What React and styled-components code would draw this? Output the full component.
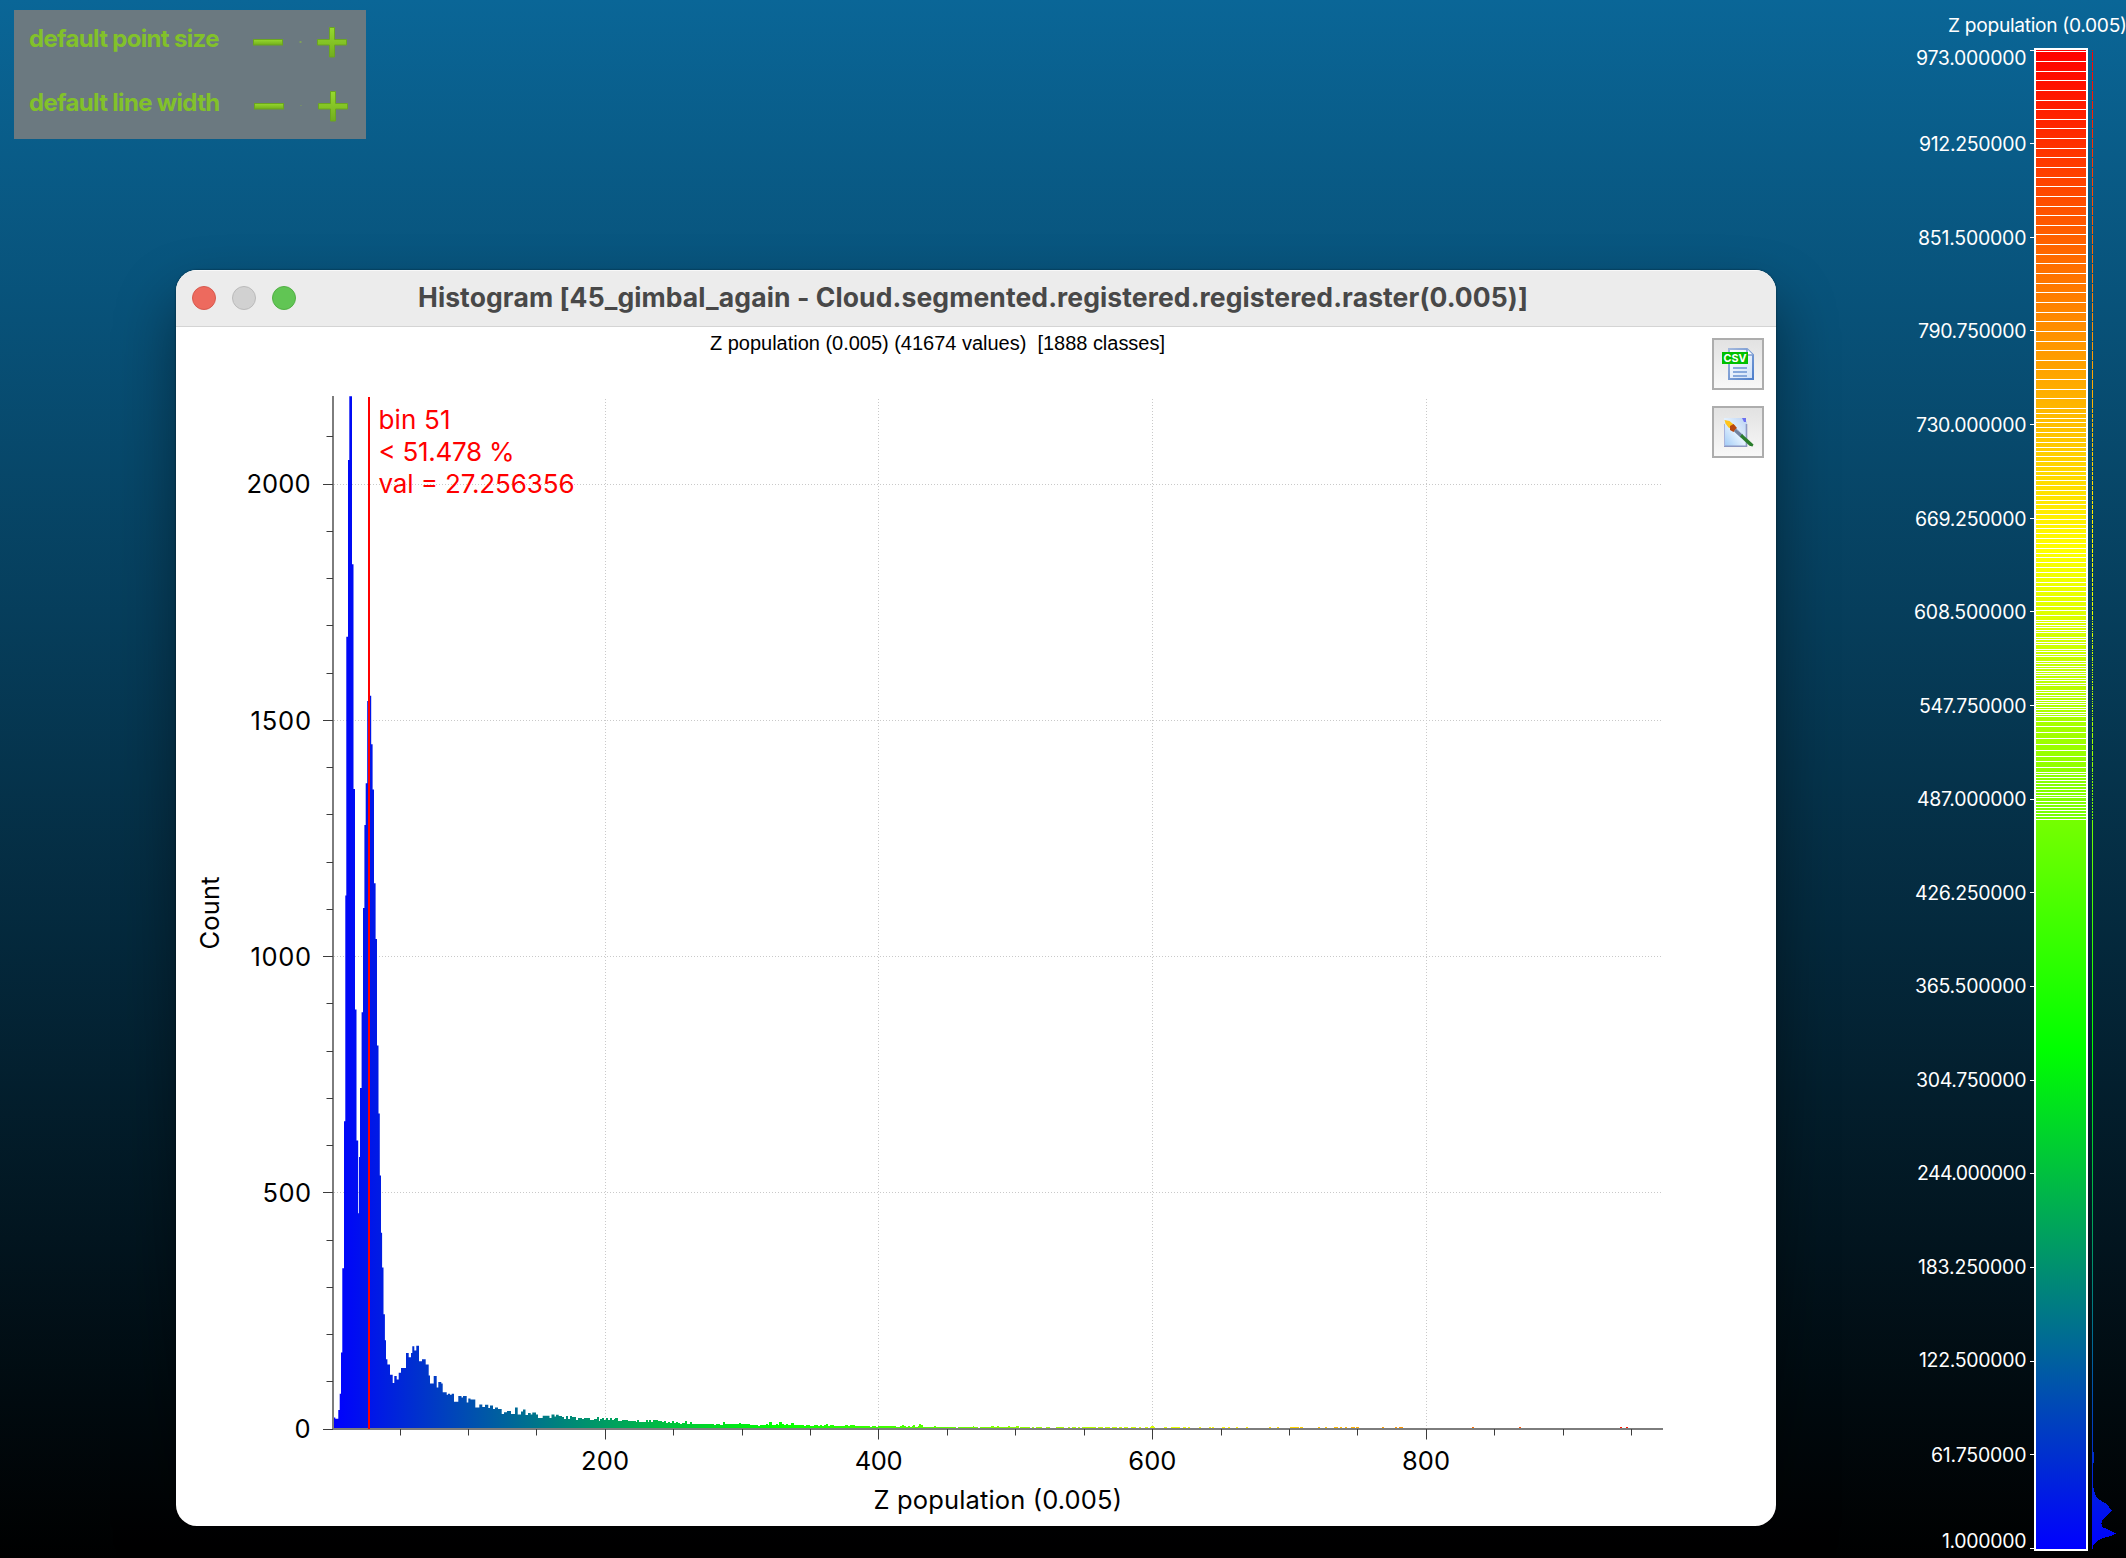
import React from "react";
import styled, { createGlobalStyle } from "styled-components";

const GlobalStyle = createGlobalStyle`
  html, body { margin: 0; padding: 0; background: #000; }
  * { box-sizing: border-box; }
`;

const UI_FONT = `Inter, "Liberation Sans", sans-serif`;

const Viewport = styled.main`
  position: relative;
  display: flex;
  justify-content: flex-end;
  width: 2126px;
  height: 1558px;
  overflow: hidden;
  background: linear-gradient(#0a6697, #000);
  font-family: ${UI_FONT};
`;

const HotZone = styled.section`
  position: absolute;
  left: 14px;
  top: 10px;
  display: flex;
  flex-direction: column;
  width: 352px;
  height: 129px;
  background: #6b7980;
`;

const HotRow = styled.div`
  display: flex;
  align-items: center;
  height: 64px;
  padding-left: 15px;
`;

const HotLabel = styled.span`
  flex: none;
  width: 210px;
  margin-top: -7px;
  font-size: 24px;
  font-weight: 700;
  letter-spacing: -0.68px;
  line-height: 30px;
  white-space: nowrap;
  color: #82c12a;
`;

const HotIcons = styled.svg`
  display: block;
  flex: none;
  width: 120px;
  height: 64px;
`;

const WindowFrame = styled.section`
  position: absolute;
  left: 176px;
  top: 270px;
  display: flex;
  flex-direction: column;
  width: 1600px;
  height: 1256px;
  border-radius: 21px;
  overflow: hidden;
  background: #fff;
`;

const WindowShadow = styled.div`
  position: absolute;
  left: 176px;
  top: 270px;
  width: 1600px;
  height: 1256px;
  border-radius: 21px;
  box-shadow: 0 0 2px rgba(0, 0, 0, 0.6), 0 30px 60px rgba(0, 0, 0, 0.42);
`;

const TitleBar = styled.header`
  display: flex;
  align-items: center;
  flex: none;
  height: 57px;
  padding: 0 0 1px 16px;
  background: #ececec;
  border-top: 1px solid #f8f8f8;
  border-bottom: 1px solid #d4d4d4;
`;

const Lights = styled.div`
  display: flex;
  flex: none;
  gap: 16px;
  width: 226px;
`;

const Light = styled.i`
  width: 24px;
  height: 24px;
  border-radius: 50%;
  background: ${(p) => p.$fill};
  border: 1px solid ${(p) => p.$edge};
`;

const Title = styled.h1`
  margin: -2px 0 0;
  font-size: 26.5px;
  font-weight: 700;
  line-height: 32px;
  letter-spacing: 0.1px;
  white-space: pre;
  color: #484848;
`;

const Body = styled.div`
  display: flex;
  height: 1199px;
`;

const Chart = styled.svg`
  display: block;
  flex: none;
  width: 1536px;
  height: 1199px;
`;

const Tools = styled.aside`
  display: flex;
  flex-direction: column;
  gap: 16px;
  padding-top: 11px;
`;

const ToolButton = styled.button`
  display: grid;
  place-items: center;
  width: 52px;
  height: 52px;
  padding: 0;
  border: 2px solid #adadad;
  background: linear-gradient(#e2e2e2, #f8f8f8);
`;

const Glyph = styled.svg`
  display: block;
  width: 32px;
  height: 32px;
`;

const Legend = styled.svg`
  display: block;
  width: 226px;
  height: 1558px;
`;

const PlotText = styled.text`
  font-family: ${(p) => p.$family || UI_FONT};
  font-size: ${(p) => p.$size}px;
  font-weight: 400;
  fill: ${(p) => p.$fill || "#000"};
  white-space: pre;
`;

/* ---------- histogram data, in window pixels ---------- */

const BASE = 1429;
const X0 = 333;
const X_UNIT = 1.3683;
const Y_UNIT = 0.4724;
const xOf = (v) => X0 + (v - 1) * X_UNIT;
const yOf = (v) => BASE - v * Y_UNIT;

// [left, right, top]
const PEAKS = [
  [333, 334, 1419.4], [334, 335.3, 1417.4], [335.3, 338.3, 1418.7], [338.3, 339.7, 1410],
  [339.7, 341, 1393.7], [341, 342.3, 1352.4], [342.3, 344, 1268.3], [344, 345.3, 1121.2],
  [345.3, 346.3, 895.4], [346.3, 348, 636.8], [348, 349.3, 460], [349.3, 352, 396.3],
  [352, 353.5, 564.3], [353.5, 355, 789], [355, 356.5, 1009.6], [356.5, 358.2, 1140.5],
  [358.2, 359, 1213.2], [359, 360, 1157], [360, 361.6, 1088], [361.6, 363, 1012.3],
  [363, 364.4, 907.9], [364.4, 365.7, 825], [365.7, 367.2, 783.2], [367.2, 368.8, 701],
  [368.8, 371.2, 695.7], [371.2, 372.6, 744.3], [372.6, 374, 789.6], [374, 375.6, 883.2],
  [375.6, 377, 939], [377, 378.5, 1045.5], [378.5, 379.8, 1113.4], [379.8, 381, 1175.6],
  [381, 382.1, 1232.8], [382.1, 383.5, 1267.6], [383.5, 384.9, 1314.2], [384.9, 386, 1340.3],
  [386, 387.4, 1359.2], [387.4, 390, 1364.6], [390, 392.7, 1374.7], [392.7, 394.3, 1382.9],
  [394.3, 396.7, 1376.1], [396.7, 398.7, 1379.5], [398.7, 401, 1372.7], [401, 406, 1368],
  [406, 408.7, 1353.1], [408.7, 411, 1357.2], [411, 412.3, 1353.1], [412.3, 414.3, 1346.3],
  [414.3, 416.3, 1350.4], [416.3, 419, 1345.7], [419, 422, 1361.2], [422, 425.7, 1359.2],
  [425.7, 428.7, 1364.6], [428.7, 430, 1375.4], [430, 433.7, 1383.5], [433.7, 436.7, 1376.1],
  [436.7, 438.3, 1387.6], [438.3, 441.3, 1381.9], [441.3, 442.7, 1383.5], [442.7, 446.7, 1392.3],
  [446.7, 448, 1394.7], [448, 450, 1393.7], [450, 451.7, 1394.7], [451.7, 454, 1393.7],
  [454, 458.3, 1401.8], [458.3, 461.5, 1396], [461.5, 463, 1397.5], [463, 466.7, 1396],
  [466.7, 468.3, 1402.5], [468.3, 470.5, 1398.5], [470.5, 475.3, 1399.5], [475.3, 479.3, 1407.5],
  [479.3, 482.3, 1404.5], [482.3, 485, 1406.9], [485, 488.3, 1404.8], [488.3, 490, 1408],
  [490, 493, 1405.5], [493, 495, 1409], [495, 498, 1407.6], [498, 501.7, 1409],
  [501.7, 504, 1414], [504, 507, 1412.2], [507, 511, 1411], [511, 515, 1414],
  [515, 517.7, 1407.6], [517.7, 521, 1414.5], [521, 523, 1411.5], [523, 525.5, 1409.6],
  [525.5, 528, 1415], [528, 530.7, 1413], [530.7, 532.3, 1414.6], [532.3, 536, 1412.6],
  [536, 538, 1414.4], [538, 542.7, 1418], [542.7, 549.5, 1415.7], [549.5, 551.5, 1418],
  [551.5, 554.5, 1414.4], [554.5, 556, 1416.5], [556, 558.7, 1414.8],
];

const TAIL = [
  [558, 11], [570, 9.5], [585, 8.5], [600, 9], [615, 8.5], [640, 6.5], [655, 7], [675, 5.4],
  [700, 4], [740, 3.4], [760, 2.8], [780, 3.8], [800, 2.8], [830, 2.6], [860, 1.7], [890, 1.6], [950, 1],
];

const SPIKES = [
  [570, 572, 12], [588, 590, 10], [597, 599.3, 11.5], [615.3, 617.3, 10],
  [637, 639.3, 8.4], [646, 648, 8], [649, 651, 8.4], [653, 655.3, 8], [685, 687, 7],
  [690, 692, 6], [723.3, 725.3, 6], [739, 741, 5], [769, 772, 5.6], [779, 782, 5.8],
  [791, 794, 4.7], [826, 828.3, 4.4], [832, 834, 3.4], [845, 848, 3], [850, 855, 3],
  [863, 867, 2.3], [886, 891, 2.3], [902, 904, 3], [913, 915, 3], [918.5, 921, 4], [921, 923, 3],
  [934, 936, 2.3], [972.5, 974, 2.3], [991, 994, 2.3], [997, 999, 2.3], [1008, 1010, 2.3],
  [1016, 1018.5, 2.5], [1151, 1154, 2.4],
];

const DASHES = [
  [0, 10], [15, 30], [36, 52], [58, 65], [72, 84], [92, 108], [117, 124], [136, 144], [150, 164],
  [193, 201], [214, 240], [249, 257], [263, 270], [298, 304], [328, 334], [337, 343], [367, 375],
  [384, 390], [407, 413], [437, 443], [508, 514], [532, 538], [570, 596], [601, 608], [655, 661],
  [676, 682], [702, 714], [720, 726], [736, 742], [753, 764], [768, 776], [847, 853], [885, 891],
  [897, 909], [1115, 1122], [1257, 1263], [1561, 1567], [1578, 1584],
].map(([a, b]) => [1100 + a / 3, 1100 + b / 3]);

const noise = (i) => {
  const s = Math.sin(i * 127.1 + 11.7) * 43758.5453;
  return s - Math.floor(s);
};

const tailHeight = (x) => {
  for (let i = 1; i < TAIL.length; i++) {
    const [x1, h1] = TAIL[i];
    const [x0, h0] = TAIL[i - 1];
    if (x <= x1) return h0 + ((h1 - h0) * (x - x0)) / (x1 - x0);
  }
  return 1;
};

const rect = (l, r, t) => `M${l} ${BASE}V${t}H${r}V${BASE}Z`;

const envelope = () => {
  let d = `M${X0} ${BASE}`;
  PEAKS.forEach(([l, r, t]) => {
    d += `L${l} ${t}L${r} ${t}`;
  });
  return `${d}V${BASE}Z`;
};

const tail = () => {
  let d = "";
  let i = 0;
  for (let x = 558; x < 950; x += 2, i++) {
    const h = tailHeight(x) * (0.8 + 0.4 * noise(i));
    d += rect(x, x + 2, 1428 - h);
  }
  for (let x = 950; x < 1100; x += 2, i++) {
    const keep = x < 1040 ? 0.88 : 0.62;
    if (noise(i) < keep) d += rect(x, x + 2, 1427);
  }
  SPIKES.forEach(([l, r, h]) => (d += rect(l, r, 1428 - h)));
  DASHES.forEach(([l, r]) => (d += rect(l, r, 1427)));
  return d;
};

const RampStops = () => (
  <>
    <stop offset="0" stopColor="#00f" />
    <stop offset="0.3333" stopColor="#0f0" />
    <stop offset="0.6667" stopColor="#ff0" />
    <stop offset="1" stopColor="#f00" />
  </>
);

function Histogram() {
  const yMinor = Array.from({ length: 22 }, (_, i) => i * 100);
  const xMinor = Array.from({ length: 19 }, (_, i) => (i + 1) * 50);
  return (
    <Chart viewBox="176 327 1536 1199">
      <defs>
        <linearGradient id="bars" gradientUnits="userSpaceOnUse" x1="333" x2="1663" y1="0" y2="0">
          <RampStops />
        </linearGradient>
      </defs>
      <PlotText x="710" y="350" $size={20} $family={`"Liberation Sans", Arial, sans-serif`} textLength="455">
        {"Z population (0.005) (41674 values)\u00a0 [1888 classes]"}
      </PlotText>

      <g stroke="#c9c9c9" strokeWidth="1" strokeDasharray="1 2">
        {[500, 1000, 1500, 2000].map((v) => (
          <line key={v} x1="334" x2="1661" y1={Math.floor(yOf(v)) + 0.5} y2={Math.floor(yOf(v)) + 0.5} />
        ))}
        {[200, 400, 600, 800].map((v) => (
          <line key={v} y1="399" y2="1428" x1={Math.floor(xOf(v)) + 0.5} x2={Math.floor(xOf(v)) + 0.5} />
        ))}
      </g>

      <path d={envelope()} fill="url(#bars)" />
      <path d={tail()} fill="url(#bars)" shapeRendering="crispEdges" />

      <g fill="#7d7d7d" shapeRendering="crispEdges">
        <rect x="332" y="396" width="2" height="1034" />
        <rect x="332" y="1428" width="1331" height="2" />
      </g>
      <g stroke="#3c3c3c" strokeWidth="1">
        {yMinor.map((v) => (
          <line
            key={v}
            x1={v % 500 === 0 ? 323 : 326.5}
            x2="333"
            y1={Math.floor(yOf(v)) + 0.5}
            y2={Math.floor(yOf(v)) + 0.5}
          />
        ))}
        {xMinor.map((v) => (
          <line
            key={v}
            y1="1429"
            y2={v % 200 === 0 ? 1439.5 : 1435.5}
            x1={Math.floor(xOf(v)) + 0.5}
            x2={Math.floor(xOf(v)) + 0.5}
          />
        ))}
      </g>

      <rect x="368" y="397" width="2" height="1032" fill="#f00" />

      <PlotText x="378.5" y="429" $size={26} $fill="#f00" textLength="72">bin 51</PlotText>
      <PlotText x="378.5" y="460.5" $size={26} $fill="#f00" textLength="136">&lt; 51.478 %</PlotText>
      <PlotText x="378.5" y="492.5" $size={26} $fill="#f00" textLength="196">val = 27.256356</PlotText>

      <PlotText x="246.5" y="493" $size={25.5} textLength="64">2000</PlotText>
      <PlotText x="250.5" y="729.5" $size={25.5} textLength="60.5">1500</PlotText>
      <PlotText x="250.5" y="965.5" $size={25.5} textLength="60.5">1000</PlotText>
      <PlotText x="262.5" y="1201.5" $size={25.5} textLength="48.5">500</PlotText>
      <PlotText x="294.500" y="1437.5" $size={25.5}>0</PlotText>

      {[200, 400, 600, 800].map((v) => (
        <PlotText key={v} x={xOf(v) - 24.3} y="1469.5" $size={25.5} textLength="48">{v}</PlotText>
      ))}
      <PlotText x="873.5" y="1508.5" $size={25.5} textLength="248.5">Z population (0.005)</PlotText>
      <PlotText transform="translate(219 949.5) rotate(-90)" $size={25.5} textLength="73">Count</PlotText>
    </Chart>
  );
}

/* ---------- colour scale ---------- */

const SCALE_LINES = [
  51, 61, 71, 80, 90, 100, 109, 119, 128, 138, 148, 157, 167, 177, 186, 196, 206, 215, 225, 234, 244,
  254, 263, 273, 283, 292, 302, 312, 321, 331, 341, 350, 360, 369, 379, 389, 398, 408, 413, 418, 422,
  427, 432, 437, 442, 447, 451, 456, 461, 466, 471, 475, 480, 485, 490, 495, 500, 504, 509, 514, 519,
  524, 528, 533, 538, 543, 548, 553, 557, 562, 567, 572, 577, 582, 586, 591, 596, 601, 606, 610, 615,
  620, 622, 625, 627, 630, 632, 637, 639, 642, 644, 649, 651, 654, 656, 661, 663, 666, 668, 671, 673,
  675, 678, 680, 683, 685, 690, 692, 695, 697, 700, 702, 704, 707, 709, 712, 714, 716, 721, 726, 732,
  738, 744, 750, 756, 761, 767, 772, 774, 777, 780, 783, 786, 789, 792, 795, 797, 801, 804, 807, 810,
  813, 816, 819,
];

// [label, left, baseline]
const SCALE_LABELS = [
  ["973.000000", 1916, 65], ["912.250000", 1919, 151], ["851.500000", 1918, 245],
  ["790.750000", 1918, 338], ["730.000000", 1916, 432], ["669.250000", 1915, 526],
  ["608.500000", 1914, 618.5], ["547.750000", 1919, 712.5], ["487.000000", 1917, 805.5],
  ["426.250000", 1915, 899.5], ["365.500000", 1915, 993], ["304.750000", 1916, 1086.5],
  ["244.000000", 1917, 1180], ["183.250000", 1918, 1274], ["122.500000", 1919, 1367],
  ["61.750000", 1931, 1461.5], ["1.000000", 1942, 1547.5],
];

// [y, right]
const SCALE_PROFILE = [
  [1486, 2093], [1490, 2094], [1493, 2095], [1497, 2096], [1500, 2100], [1503, 2105], [1507, 2109],
  [1511, 2112], [1514, 2108], [1517, 2105], [1519, 2103], [1523, 2101.4], [1527, 2102],
  [1529, 2107], [1532, 2113], [1533.5, 2116], [1536, 2111], [1538, 2103], [1541, 2097],
  [1544, 2094], [1547, 2093],
];

function ColorScale() {
  const profile = SCALE_PROFILE.map(([y, x]) => `L${x} ${y}`).join("");
  return (
    <Legend viewBox="1900 0 226 1558">
      <defs>
        <linearGradient id="ramp" gradientUnits="userSpaceOnUse" x1="0" x2="0" y1="1549" y2="50">
          <RampStops />
        </linearGradient>
        <mask id="gaps" maskUnits="userSpaceOnUse" x="2090" y="0" width="36" height="1558">
          <rect x="2090" y="0" width="36" height="1558" fill="#fff" />
          {SCALE_LINES.map((y) => (
            <rect key={y} x="2090" y={y} width="36" height="1" fill="#000" />
          ))}
        </mask>
      </defs>
      <PlotText x="1948" y="32" $size={19.2} $fill="#fff" textLength="179">Z population (0.005)</PlotText>
      <g shapeRendering="crispEdges">
        <rect x="2034" y="48" width="54" height="1503" fill="#fff" />
        <rect x="2036" y="50" width="50" height="1499" fill="url(#ramp)" />
        {SCALE_LINES.map((y) => (
          <rect key={y} x="2036" y={y} width="50" height="1" fill="#fff" />
        ))}
        {SCALE_LABELS.map(([label], i) => (
          <rect key={label} x="2030" y={Math.floor(50 + i * 93.65)} width="4" height="1" fill="#fff" />
        ))}
        <rect x="2092" y="50" width="1" height="1499" fill="url(#ramp)" mask="url(#gaps)" />
        <rect x="2092" y="1452" width="2" height="11" fill="url(#ramp)" />
        <path d={`M2092 1486${profile}L2092 1549Z`} fill="url(#ramp)" />
      </g>
      {SCALE_LABELS.map(([label, x, y]) => (
        <PlotText key={label} x={x} y={y} $size={19.5} $fill="#fff" textLength={2026.5 - x}>
          {label}
        </PlotText>
      ))}
    </Legend>
  );
}

/* ---------- controls ---------- */

function PlusMinus({ dx, dot }) {
  const edge = { fill: "url(#lime)", stroke: "#6ba61f", strokeWidth: 1 };
  return (
    <HotIcons viewBox="0 0 120 64">
      <defs>
        <linearGradient id="lime" x1="0" x2="0" y1="0" y2="1">
          <stop offset="0" stopColor="#96d92d" />
          <stop offset="1" stopColor="#72ae1d" />
        </linearGradient>
      </defs>
      <rect x={14.5 + dx} y="29.5" width="29" height="5.5" {...edge} />
      <rect x={60.5 + dx} y="31" width={dot} height={dot} fill="#7fa05a" />
      <path
        d="M90.5 17.5h5v12h12v5.5h-12v12h-5v-12h-12v-5.5h12z"
        transform={`translate(${dx} 0)`}
        {...edge}
      />
    </HotIcons>
  );
}

function CsvIcon() {
  return (
    <Glyph viewBox="0 0 32 32">
      <defs>
        <linearGradient id="sheet" x1="0" x2="1" y1="0" y2="1">
          <stop offset="0" stopColor="#fff" />
          <stop offset="1" stopColor="#cfe0f8" />
        </linearGradient>
        <linearGradient id="sheetEdge" x1="0" x2="1" y1="0" y2="1">
          <stop offset="0" stopColor="#a3b8dc" />
          <stop offset="1" stopColor="#4f7fcb" />
        </linearGradient>
      </defs>
      <path d="M7 1h18l6 6v24H7z" fill="url(#sheet)" stroke="url(#sheetEdge)" strokeWidth="2" />
      <path d="M25 1v6h6" fill="#fff" stroke="#7d9cd2" strokeWidth="1.6" />
      <path d="M11 20h14M11 24h14M11 28h14" stroke="#88a9dc" strokeWidth="2" />
      <rect x="0" y="4" width="26" height="12" fill="#00c000" />
      <text x="1.500" y="14" fontFamily="Inter, sans-serif" fontWeight="700" fontSize="11" textLength="23" lengthAdjust="spacingAndGlyphs" fill="#fff">
        CSV
      </text>
    </Glyph>
  );
}

function BrushIcon() {
  return (
    <Glyph viewBox="0 0 32 32">
      <defs>
        <linearGradient id="page" x1="0" x2="1" y1="1" y2="0">
          <stop offset="0" stopColor="#9cc8f6" />
          <stop offset="0.5" stopColor="#e3f1fe" />
          <stop offset="1" stopColor="#b9d0f2" />
        </linearGradient>
      </defs>
      <path d="M2 2h19l4 4v25H2z" fill="url(#page)" />
      <path d="M2 30.2h22.500V8" fill="none" stroke="#8d98c2" strokeWidth="1.6" />
      <path d="M2.500 30V8" stroke="#a9b4dc" strokeWidth="1" />
      <path d="M20 2h4v4h-2z" fill="#6b6ff0" />
      <path d="M2.500 4l5 1 6 5-3 3.500-4-2-3-4z" fill="#ffc41c" />
      <path d="M8 10l3.500-2 3.500 4-3.500 4-3.500-2z" fill="#b8460e" />
      <path d="M14 12.500l7 6-2.500 3-6.500-6z" fill="#70819f" />
      <path d="M14.500 13l6 5.200" stroke="#b9c9e2" strokeWidth="1" />
      <path d="M20 18l11.500 10.500-1 2-3-.8-9.500-9z" fill="#2a7d2c" />
    </Glyph>
  );
}

export default function App() {
  return (
    <Viewport>
      <GlobalStyle />
      <ColorScale />
      <HotZone>
        <HotRow>
          <HotLabel>default point size</HotLabel>
          <PlusMinus dx={0} dot={2} />
        </HotRow>
        <HotRow>
          <HotLabel>default line width</HotLabel>
          <PlusMinus dx={1} dot={1} />
        </HotRow>
      </HotZone>
      <WindowShadow />
      <WindowFrame>
        <TitleBar>
          <Lights>
            <Light $fill="#ed6a5e" $edge="#d65a4f" />
            <Light $fill="#d1d1d1" $edge="#bababa" />
            <Light $fill="#61c554" $edge="#52b045" />
          </Lights>
          <Title>Histogram [45_gimbal_again - Cloud.segmented.registered.registered.raster(0.005)]</Title>
        </TitleBar>
        <Body>
          <Histogram />
          <Tools>
            <ToolButton aria-label="Export CSV"><CsvIcon /></ToolButton>
            <ToolButton aria-label="Export image"><BrushIcon /></ToolButton>
          </Tools>
        </Body>
      </WindowFrame>
    </Viewport>
  );
}
